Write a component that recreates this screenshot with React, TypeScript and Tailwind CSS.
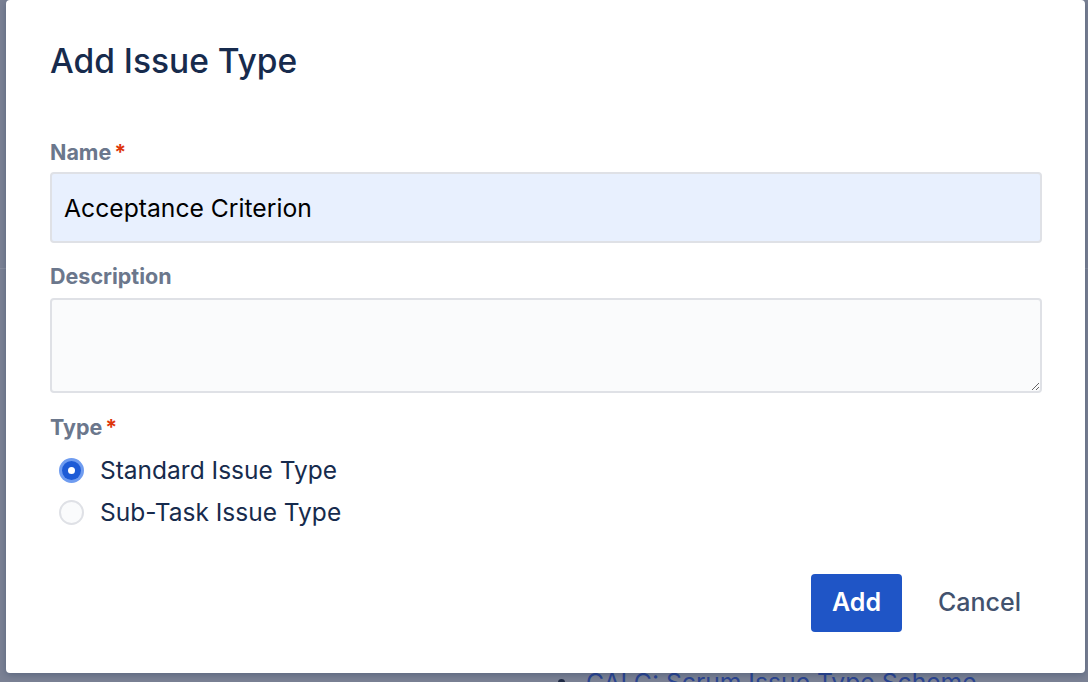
import { useState } from "react";

const FONT = "font-['Inter','Noto_Sans',sans-serif]";

function Label({ text, required }: { text: string; required?: boolean }) {
  return (
    <div className="flex h-[24px] items-center text-[21.5px] leading-[24px] font-bold text-[#6b778c]">
      {text}
      {required && <span className="ml-[3px] text-[#de350b]">*</span>}
    </div>
  );
}

function Radio({
  checked,
  label,
  onSelect,
}: {
  checked: boolean;
  label: string;
  onSelect: () => void;
}) {
  return (
    <button
      type="button"
      onClick={onSelect}
      className="flex h-[42px] items-center gap-[16px] pl-[9px] text-left"
    >
      {checked ? (
        <span className="flex h-[25px] w-[25px] items-center justify-center rounded-full bg-[#6f9cf0]">
          <span className="flex h-[19px] w-[19px] items-center justify-center rounded-full bg-[#1d5bd6]">
            <span className="h-[7px] w-[7px] rounded-full bg-white" />
          </span>
        </span>
      ) : (
        <span className="h-[25px] w-[25px] rounded-full border-2 border-[#dfe1e6] bg-[#fafbfc]" />
      )}
      <span className="text-[24.5px] leading-[30px] text-[#172b4d]">{label}</span>
    </button>
  );
}

export default function App() {
  const [type, setType] = useState<"standard" | "subtask">("standard");

  return (
    <div className={`relative h-[682px] w-full overflow-hidden bg-[#7a8194] ${FONT}`}>
      {/* page behind the dialog */}
      <div className="h-[269px] border-b border-[#878d9e]" />
      <div className="-ml-[10px] mt-[56px] text-[22px] leading-[28px] text-[#283c80]">r</div>
      <ul className="mt-[314px] pl-[558px] text-[24.7px] leading-[30px] text-[#2b4592]">
        <li className="flex items-center gap-[21px]">
          <span className="h-[7px] w-[7px] rounded-full bg-[#1f2a44]" />
          <span>CALC: Scrum Issue Type Scheme</span>
        </li>
      </ul>

      {/* dialog */}
      <div className="absolute left-[6px] top-0 flex h-[673px] w-[1079px] flex-col rounded-[4px] bg-white pl-[44px] pr-[43px] shadow-[0_2px_6px_rgba(9,30,66,0.25)]">
        <h1 className="mt-[41px] text-[33.5px] leading-[40px] font-medium text-[#172b4d]">
          Add Issue Type
        </h1>

        <div className="mt-[59px]">
          <Label text="Name" required />
          <input
            defaultValue="Acceptance Criterion"
            className="mt-[8px] h-[71px] w-full rounded-[4px] border-2 border-[#dfe1e6] bg-[#e8f0fe] px-[12px] text-[24.7px] text-black outline-none"
          />
        </div>

        <div className="mt-[21px]">
          <Label text="Description" />
          <textarea className="mt-[10px] block h-[95px] w-full resize-y rounded-[4px] border-2 border-[#dfe1e6] bg-[#fafbfc] px-[12px] py-[8px] text-[22px] outline-none" />
        </div>

        <div className="mt-[22px]">
          <Label text="Type" required />
          <div className="mt-[10px] flex flex-col">
            <Radio
              checked={type === "standard"}
              label="Standard Issue Type"
              onSelect={() => setType("standard")}
            />
            <Radio
              checked={type === "subtask"}
              label="Sub-Task Issue Type"
              onSelect={() => setType("subtask")}
            />
          </div>
        </div>

        <div className="mt-[41px] flex justify-end gap-[15px]">
          <button
            type="button"
            className="h-[58px] rounded-[4px] bg-[#1f55c6] px-[21px] text-[25px] font-semibold text-white"
          >
            Add
          </button>
          <button
            type="button"
            className="h-[58px] rounded-[4px] px-[21px] text-[25px] font-medium text-[#42526e]"
          >
            Cancel
          </button>
        </div>
      </div>
    </div>
  );
}
